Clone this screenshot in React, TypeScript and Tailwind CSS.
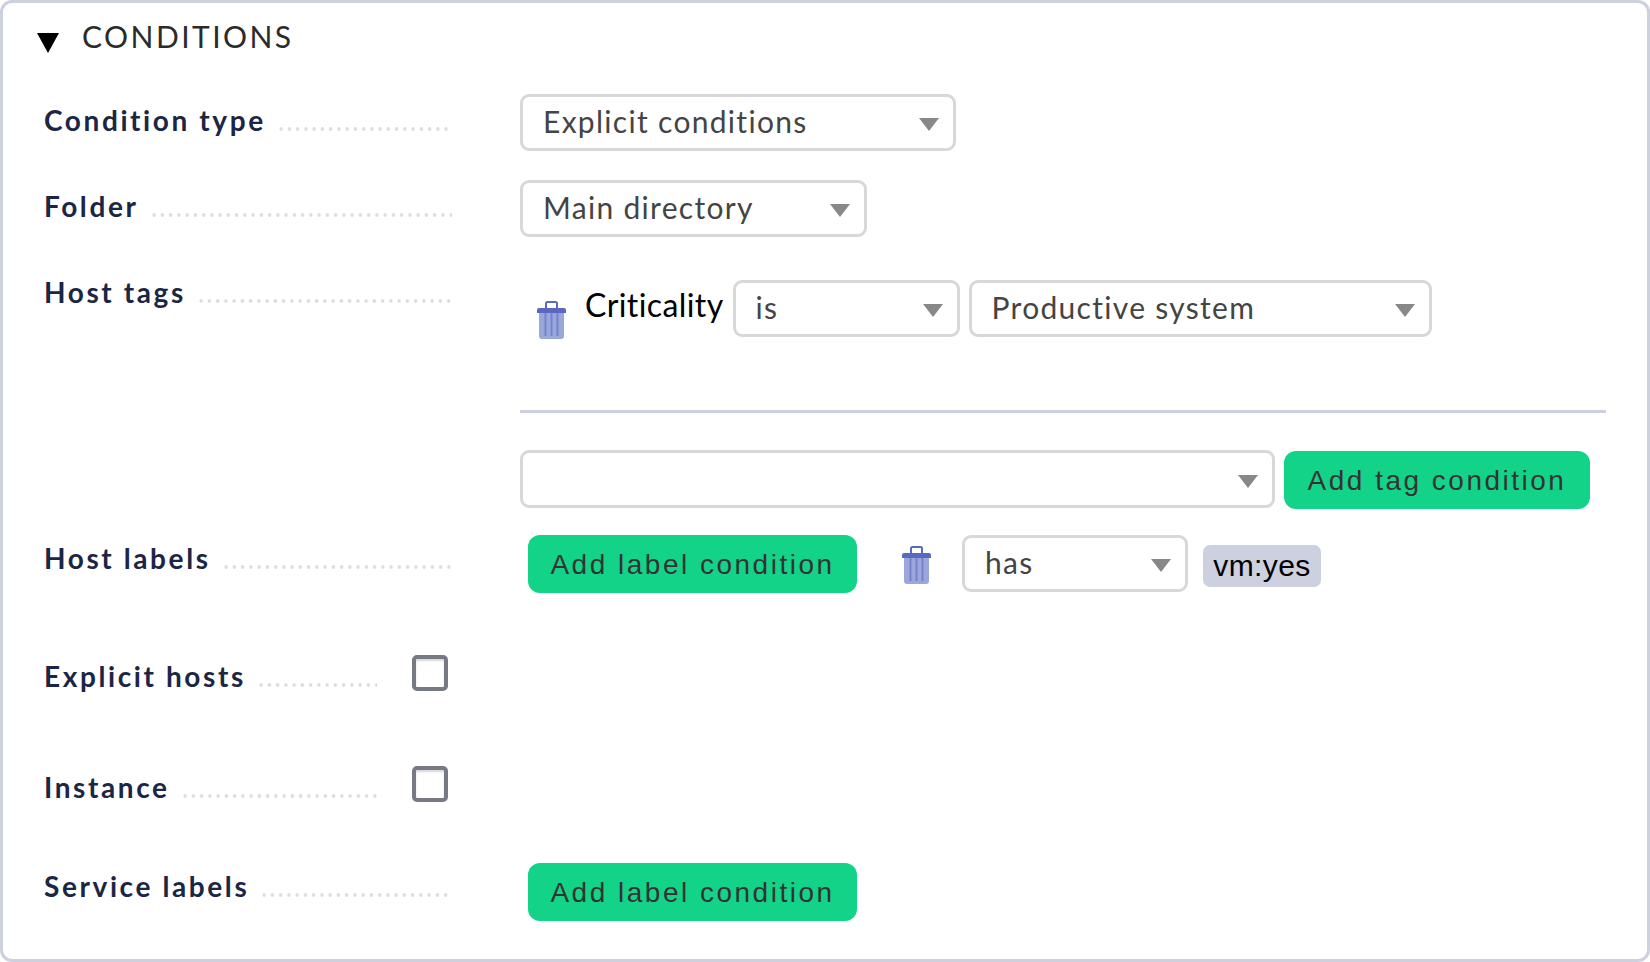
import type { ReactNode } from 'react'

const lato = 'font-["Lato",sans-serif]'

function Arrow() {
  return (
    <svg width="20" height="13" viewBox="0 0 20 13" className="mt-[4px] shrink-0">
      <path d="M0 0h20L10 13z" fill="#888888" />
    </svg>
  )
}

function Select({ value, width, className = '' }: { value: string; width: string; className?: string }) {
  return (
    <div
      className={`flex h-[57px] shrink-0 items-center justify-between rounded-[9px] border-[3px] border-[#d8d8d8] bg-white pl-[20px] pr-[14px] ${lato} text-[30px] tracking-[1.3px] text-[#444444] ${width} ${className}`}
    >
      <span className="-mt-[2px]">{value}</span>
      <Arrow />
    </div>
  )
}

function Button({ children, width }: { children: ReactNode; width: string }) {
  return (
    <div
      className={`flex h-[58px] shrink-0 items-center justify-center rounded-[12px] bg-[#13d389] pt-[1px] font-["Liberation_Sans",sans-serif] text-[28px] tracking-[2.5px] text-[#333333] ${width}`}
    >
      {children}
    </div>
  )
}

function Trash() {
  return (
    <svg width="29" height="38" viewBox="0 0 29 38" className="shrink-0">
      <path d="M2 12h25v23a3 3 0 0 1-3 3H5a3 3 0 0 1-3-3z" fill="#9ba6dc" />
      <path d="M8.5 12v23M14.5 12v23M20.5 12v23" stroke="#7683c9" strokeWidth="2" fill="none" />
      <path d="M2 7h25a2 2 0 0 1 2 2v3H0V9a2 2 0 0 1 2-2z" fill="#5a68c0" />
      <path d="M9 7V2.5A1.5 1.5 0 0 1 10.5 1h8A1.5 1.5 0 0 1 20 2.5V7" fill="none" stroke="#5a68c0" strokeWidth="2" />
    </svg>
  )
}

function Label({ text, width }: { text: string; width: string }) {
  return (
    <div className={`flex h-[34px] shrink-0 items-end ${width}`}>
      <span className={`${lato} text-[28px] font-bold leading-[34px] tracking-[2.6px] text-[#1b2645]`}>{text}</span>
      <span className="mb-[6px] ml-[11px] h-[4px] flex-1 bg-[radial-gradient(circle,#dddddd_1.6px,transparent_2px)] bg-[length:8.25px_4px]" />
    </div>
  )
}

function Checkbox() {
  return <div className="ml-[35px] h-[36px] w-[36px] rounded-[5px] border-[4px] border-[#777a82] bg-white shadow-[inset_0_2px_2px_rgba(0,0,0,0.15)]" />
}

export default function App() {
  return (
    <div className="h-[962px] w-[1650px] overflow-hidden rounded-[12px] border-[3px] border-[#cdd0de] bg-white pl-[34px]">
      {/* Section header */}
      <div className="flex h-[91px] items-start pt-[15px]">
        <svg width="22" height="20" viewBox="0 0 22 20" className="mt-[15px] shrink-0">
          <path d="M0 0h22L11 20z" fill="#000000" />
        </svg>
        <span className={`ml-[23px] ${lato} text-[30px] leading-[36px] tracking-[2.45px] text-[#2b2b2b]`}>CONDITIONS</span>
      </div>

      <div className="pl-[7px]">
        <div className="flex h-[86px] items-start">
          <Label text="Condition type" width="mt-[9px] w-[408px]" />
          <Select value="Explicit conditions" width="ml-[68px] w-[436px]" />
        </div>

        <div className="flex h-[86px] items-start">
          <Label text="Folder" width="mt-[9px] w-[408px]" />
          <Select value="Main directory" width="ml-[68px] w-[347px]" />
        </div>

        {/* Host tags */}
        <div className="flex h-[269px] items-start">
          <Label text="Host tags" width="mt-[9px] w-[408px]" />
          <div className="ml-[68px] flex-1">
            <div className="flex items-start pt-[14px]">
              <div className="ml-[17px] mt-[21px]">
                <Trash />
              </div>
              <span className={`ml-[19px] mt-[5px] ${lato} text-[32px] leading-[40px] tracking-[0.4px] text-black`}>Criticality</span>
              <Select value="is" width="ml-[9px] w-[227px]" />
              <Select value="Productive system" width="ml-[9px] w-[463px]" />
            </div>
            <div className="mr-[41px] mt-[71px] h-[3px] bg-[#cdd0de]" />
            <div className="mt-[37px] flex items-start">
              <Select value="" width="h-[58px] w-[755px]" />
              <div className="ml-[9px] mt-[1px]">
                <Button width="w-[306px]">Add tag condition</Button>
              </div>
            </div>
          </div>
        </div>

        {/* Host labels */}
        <div className="flex h-[120px] items-start">
          <Label text="Host labels" width="mt-[6px] w-[408px]" />
          <div className="ml-[76px] flex items-start">
            <Button width="w-[329px]">Add label condition</Button>
            <div className="ml-[45px] mt-[11px]">
              <Trash />
            </div>
            <Select value="has" width="ml-[31px] w-[226px]" />
            <span className='ml-[15px] mt-[10px] flex h-[42px] w-[118px] items-center justify-center rounded-[7px] bg-[#cdd0de] pb-[2px] font-["Liberation_Sans",sans-serif] text-[30px] tracking-[0.4px] text-black'>
              vm:yes
            </span>
          </div>
        </div>

        <div className="flex h-[111px] items-start">
          <Label text="Explicit hosts" width="mt-[4px] w-[333px]" />
          <Checkbox />
        </div>

        <div className="flex h-[97px] items-start">
          <Label text="Instance" width="mt-[4px] w-[333px]" />
          <Checkbox />
        </div>

        <div className="flex items-start">
          <Label text="Service labels" width="mt-[6px] w-[408px]" />
          <div className="ml-[76px]">
            <Button width="w-[329px]">Add label condition</Button>
          </div>
        </div>
      </div>
    </div>
  )
}
